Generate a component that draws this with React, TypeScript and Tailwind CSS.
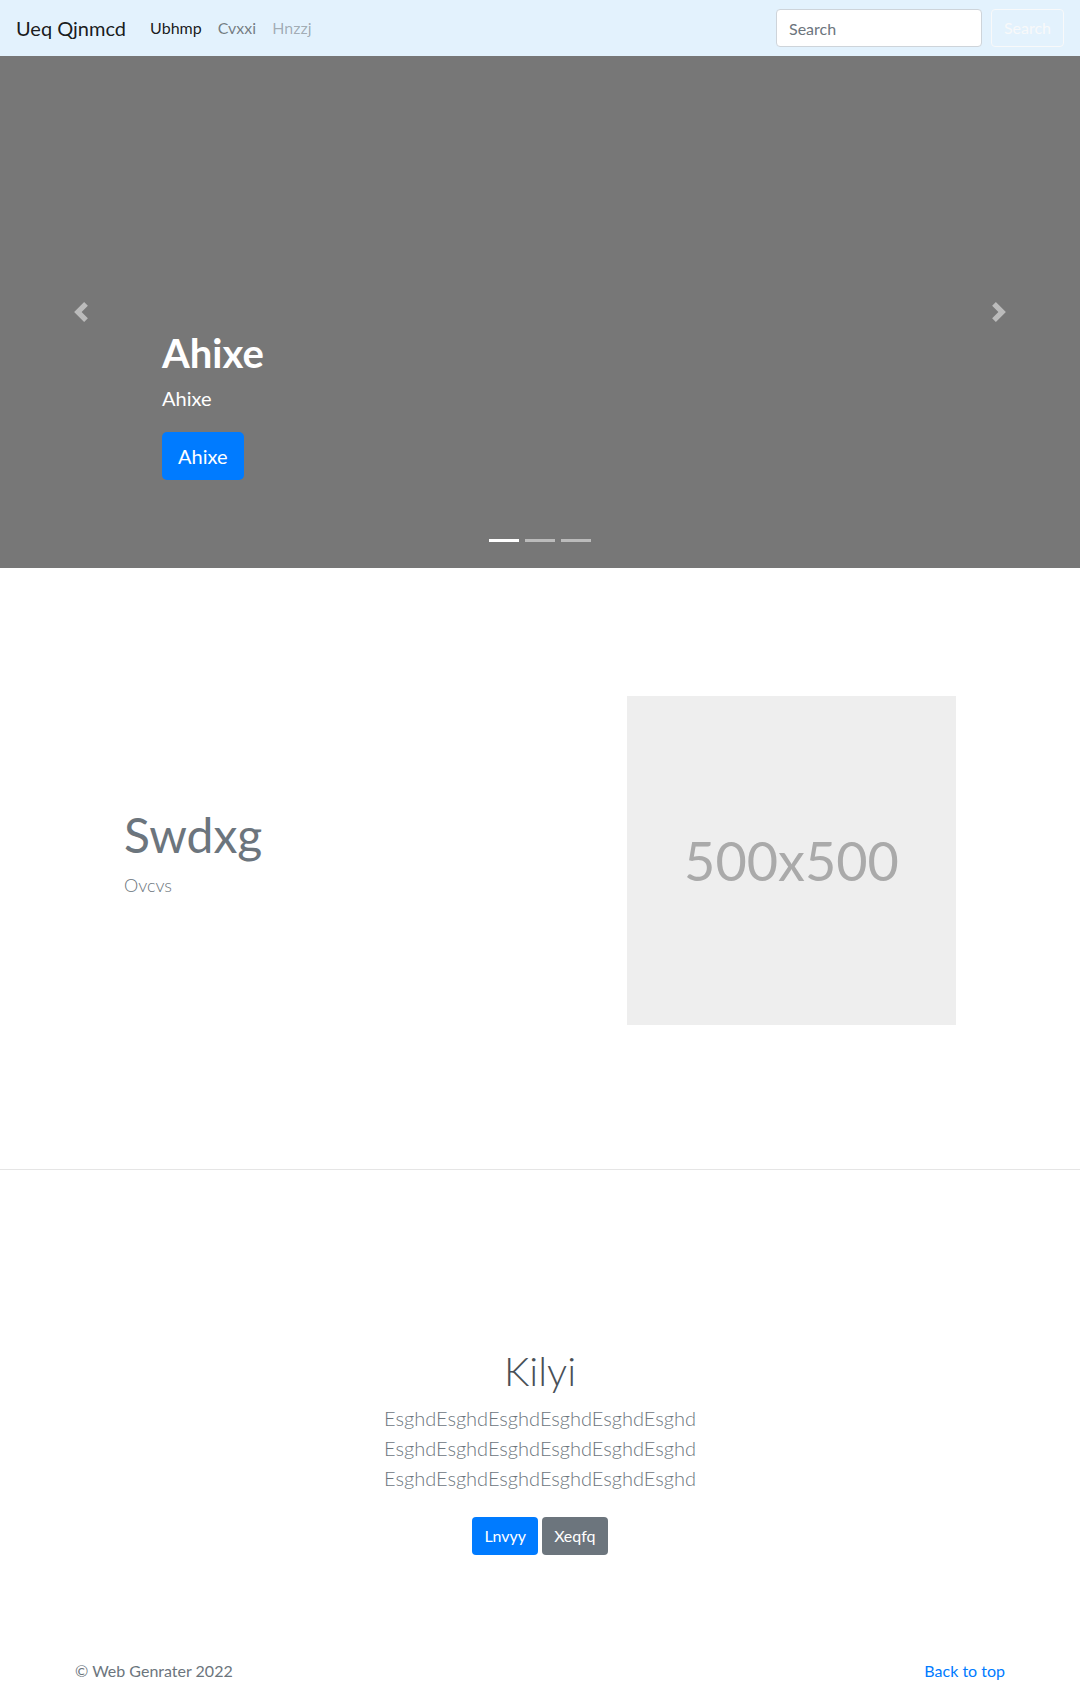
import React from 'react';

const navLinks = [
  { label: 'Ubhmp', cls: 'text-black/90' },
  { label: 'Cvxxi', cls: 'text-black/50' },
  { label: 'Hnzzj', cls: 'text-black/30' },
];

function ChevronLeft() {
  return (
    <svg viewBox="0 0 8 8" className="w-5 h-5" fill="#fff">
      <path d="M5.25 0l-4 4 4 4 1.5-1.5L4.25 4l2.5-2.5L5.25 0z" />
    </svg>
  );
}

function ChevronRight() {
  return (
    <svg viewBox="0 0 8 8" className="w-5 h-5" fill="#fff">
      <path d="M2.75 0l-1.5 1.5L3.75 4l-2.5 2.5L2.75 8l4-4-4-4z" />
    </svg>
  );
}

export default function App() {
  return (
    <div className="w-[1080px] h-[1682px] overflow-hidden bg-white font-['Lato','Open_Sans',sans-serif] text-[#212529]">
      {/* Navbar */}
      <nav className="h-14 bg-[#e3f2fd] flex items-center px-4">
        <span className="text-[20px] leading-[30px] text-black/90 mr-4">Ueq Qjnmcd</span>
        <ul className="flex items-center text-[16px]">
          {navLinks.map((l) => (
            <li key={l.label} className={`px-2 ${l.cls}`}>{l.label}</li>
          ))}
        </ul>
        <div className="ml-auto flex items-center">
          <input
            placeholder="Search"
            className="w-[206px] h-[38px] rounded border border-[#ced4da] bg-white px-3 text-[16px] placeholder:text-[#6c757d] outline-none"
          />
          <button className="ml-[9px] h-[38px] w-[73px] rounded border border-[#f8f9fa] text-[#f8f9fa] text-[16px]">
            Search
          </button>
        </div>
      </nav>

      {/* Carousel */}
      <div className="relative h-[512px] bg-[#777] flex flex-col justify-end pl-[162px] pb-[88px]">
        <div className="absolute left-0 top-0 h-full w-[15%] flex items-center justify-center opacity-50">
          <ChevronLeft />
        </div>
        <div className="absolute right-0 top-0 h-full w-[15%] flex items-center justify-center opacity-50">
          <ChevronRight />
        </div>
        <h1 className="text-[40px] leading-[48px] font-bold text-white mb-[6px]">Ahixe</h1>
        <p className="text-[20px] leading-[30px] text-white mb-[19px]">Ahixe</p>
        <div>
          <button className="h-12 px-4 rounded-[5px] bg-[#007bff] text-white text-[20px]">Ahixe</button>
        </div>
        <div className="absolute bottom-[26px] left-0 right-0 flex justify-center gap-[6px]">
          <span className="w-[30px] h-[3px] bg-white" />
          <span className="w-[30px] h-[3px] bg-white/50" />
          <span className="w-[30px] h-[3px] bg-white/50" />
        </div>
      </div>

      {/* Featurette */}
      <section className="flex items-center justify-between px-[124px] pt-[128px] pb-[144px]">
        <div>
          <h2 className="text-[48px] leading-[58px] text-[#6c757d] mb-2">Swdxg</h2>
          <p className="text-[18px] leading-[27px] font-light text-[#6c757d] mb-4">Ovcvs</p>
        </div>
        <div className="w-[329px] h-[329px] bg-[#eee] flex items-center justify-center">
          <span className="text-[54px] text-[#aaa]">500x500</span>
        </div>
      </section>
      <hr className="border-0 border-t border-[#e5e5e5]" />

      {/* Centered section */}
      <section className="flex flex-col items-center text-center pt-[177px]">
        <h1 className="text-[40px] leading-[48px] font-light text-[#495057] mb-2">Kilyi</h1>
        <p className="text-[20px] leading-[30px] font-light text-[#6c757d] mb-4">
          EsghdEsghdEsghdEsghdEsghdEsghd
          <br />
          EsghdEsghdEsghdEsghdEsghdEsghd
          <br />
          EsghdEsghdEsghdEsghdEsghdEsghd
        </p>
        <div className="flex gap-1 mt-2">
          <button className="h-[38px] px-3 rounded bg-[#007bff] text-white text-[16px]">Lnvyy</button>
          <button className="h-[38px] px-3 rounded bg-[#6c757d] text-white text-[16px]">Xeqfq</button>
        </div>
      </section>

      {/* Footer */}
      <footer className="flex justify-between px-[75px] pt-[104px] text-[16px] leading-6">
        <p className="text-[#6c757d]">© Web Genrater 2022</p>
        <a className="text-[#007bff]">Back to top</a>
      </footer>
    </div>
  );
}
